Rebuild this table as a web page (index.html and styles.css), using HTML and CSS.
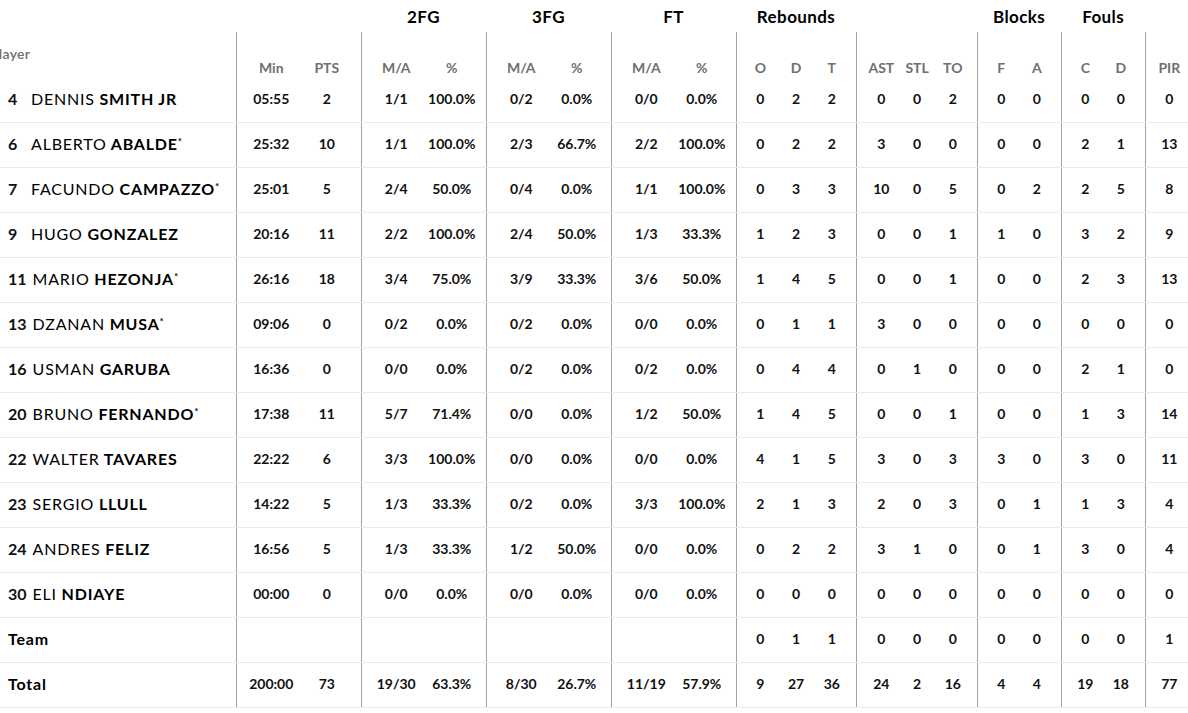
FILE: index.html
```html
<!DOCTYPE html>
<html lang="en">
<head>
<meta charset="utf-8">
<title>Box score</title>
<link rel="stylesheet" href="styles.css">
</head>
<body>
<div class="wrap">
<table class="box">
  <colgroup>
    <col class="c-player">
    <col class="c-a"><col class="c-b">
    <col class="c-a"><col class="c-b">
    <col class="c-a"><col class="c-b">
    <col class="c-a"><col class="c-b">
    <col class="c-s1"><col class="c-s"><col class="c-s2">
    <col class="c-s1w"><col class="c-s"><col class="c-s2">
    <col class="c-s1"><col class="c-s2">
    <col class="c-s1"><col class="c-s2">
    <col class="c-pir">
  </colgroup>
  <thead>
    <tr class="groups">
      <th></th>
      <th colspan="2"></th>
      <th colspan="2">2FG</th>
      <th colspan="2">3FG</th>
      <th colspan="2">FT</th>
      <th colspan="3">Rebounds</th>
      <th colspan="3"></th>
      <th colspan="2">Blocks</th>
      <th colspan="2">Fouls</th>
      <th></th>
    </tr>
    <tr class="labels">
      <th class="player-h">Player</th>
      <th>Min</th><th>PTS</th>
      <th>M/A</th><th>%</th>
      <th>M/A</th><th>%</th>
      <th>M/A</th><th>%</th>
      <th>O</th><th>D</th><th>T</th>
      <th>AST</th><th>STL</th><th>TO</th>
      <th>F</th><th>A</th>
      <th>C</th><th>D</th>
      <th>PIR</th>
    </tr>
  </thead>
  <tbody>
    <tr><td><span class="num">4</span><span class="first">DENNIS</span> <span class="last">SMITH JR</span></td><td>05:55</td><td>2</td><td>1/1</td><td>100.0%</td><td>0/2</td><td>0.0%</td><td>0/0</td><td>0.0%</td><td>0</td><td>2</td><td>2</td><td>0</td><td>0</td><td>2</td><td>0</td><td>0</td><td>0</td><td>0</td><td>0</td></tr>
    <tr><td><span class="num">6</span><span class="first">ALBERTO</span> <span class="last">ABALDE</span><sup class="star">*</sup></td><td>25:32</td><td>10</td><td>1/1</td><td>100.0%</td><td>2/3</td><td>66.7%</td><td>2/2</td><td>100.0%</td><td>0</td><td>2</td><td>2</td><td>3</td><td>0</td><td>0</td><td>0</td><td>0</td><td>2</td><td>1</td><td>13</td></tr>
    <tr><td><span class="num">7</span><span class="first">FACUNDO</span> <span class="last">CAMPAZZO</span><sup class="star">*</sup></td><td>25:01</td><td>5</td><td>2/4</td><td>50.0%</td><td>0/4</td><td>0.0%</td><td>1/1</td><td>100.0%</td><td>0</td><td>3</td><td>3</td><td>10</td><td>0</td><td>5</td><td>0</td><td>2</td><td>2</td><td>5</td><td>8</td></tr>
    <tr><td><span class="num">9</span><span class="first">HUGO</span> <span class="last">GONZALEZ</span></td><td>20:16</td><td>11</td><td>2/2</td><td>100.0%</td><td>2/4</td><td>50.0%</td><td>1/3</td><td>33.3%</td><td>1</td><td>2</td><td>3</td><td>0</td><td>0</td><td>1</td><td>1</td><td>0</td><td>3</td><td>2</td><td>9</td></tr>
    <tr><td><span class="num">11</span><span class="first">MARIO</span> <span class="last">HEZONJA</span><sup class="star">*</sup></td><td>26:16</td><td>18</td><td>3/4</td><td>75.0%</td><td>3/9</td><td>33.3%</td><td>3/6</td><td>50.0%</td><td>1</td><td>4</td><td>5</td><td>0</td><td>0</td><td>1</td><td>0</td><td>0</td><td>2</td><td>3</td><td>13</td></tr>
    <tr><td><span class="num">13</span><span class="first">DZANAN</span> <span class="last">MUSA</span><sup class="star">*</sup></td><td>09:06</td><td>0</td><td>0/2</td><td>0.0%</td><td>0/2</td><td>0.0%</td><td>0/0</td><td>0.0%</td><td>0</td><td>1</td><td>1</td><td>3</td><td>0</td><td>0</td><td>0</td><td>0</td><td>0</td><td>0</td><td>0</td></tr>
    <tr><td><span class="num">16</span><span class="first">USMAN</span> <span class="last">GARUBA</span></td><td>16:36</td><td>0</td><td>0/0</td><td>0.0%</td><td>0/2</td><td>0.0%</td><td>0/2</td><td>0.0%</td><td>0</td><td>4</td><td>4</td><td>0</td><td>1</td><td>0</td><td>0</td><td>0</td><td>2</td><td>1</td><td>0</td></tr>
    <tr><td><span class="num">20</span><span class="first">BRUNO</span> <span class="last">FERNANDO</span><sup class="star">*</sup></td><td>17:38</td><td>11</td><td>5/7</td><td>71.4%</td><td>0/0</td><td>0.0%</td><td>1/2</td><td>50.0%</td><td>1</td><td>4</td><td>5</td><td>0</td><td>0</td><td>1</td><td>0</td><td>0</td><td>1</td><td>3</td><td>14</td></tr>
    <tr><td><span class="num">22</span><span class="first">WALTER</span> <span class="last">TAVARES</span></td><td>22:22</td><td>6</td><td>3/3</td><td>100.0%</td><td>0/0</td><td>0.0%</td><td>0/0</td><td>0.0%</td><td>4</td><td>1</td><td>5</td><td>3</td><td>0</td><td>3</td><td>3</td><td>0</td><td>3</td><td>0</td><td>11</td></tr>
    <tr><td><span class="num">23</span><span class="first">SERGIO</span> <span class="last">LLULL</span></td><td>14:22</td><td>5</td><td>1/3</td><td>33.3%</td><td>0/2</td><td>0.0%</td><td>3/3</td><td>100.0%</td><td>2</td><td>1</td><td>3</td><td>2</td><td>0</td><td>3</td><td>0</td><td>1</td><td>1</td><td>3</td><td>4</td></tr>
    <tr><td><span class="num">24</span><span class="first">ANDRES</span> <span class="last">FELIZ</span></td><td>16:56</td><td>5</td><td>1/3</td><td>33.3%</td><td>1/2</td><td>50.0%</td><td>0/0</td><td>0.0%</td><td>0</td><td>2</td><td>2</td><td>3</td><td>1</td><td>0</td><td>0</td><td>1</td><td>3</td><td>0</td><td>4</td></tr>
    <tr><td><span class="num">30</span><span class="first">ELI</span> <span class="last">NDIAYE</span></td><td>00:00</td><td>0</td><td>0/0</td><td>0.0%</td><td>0/0</td><td>0.0%</td><td>0/0</td><td>0.0%</td><td>0</td><td>0</td><td>0</td><td>0</td><td>0</td><td>0</td><td>0</td><td>0</td><td>0</td><td>0</td><td>0</td></tr>
    <tr class="sum"><td>Team</td><td></td><td></td><td></td><td></td><td></td><td></td><td></td><td></td><td>0</td><td>1</td><td>1</td><td>0</td><td>0</td><td>0</td><td>0</td><td>0</td><td>0</td><td>0</td><td>1</td></tr>
    <tr class="sum"><td>Total</td><td>200:00</td><td>73</td><td>19/30</td><td>63.3%</td><td>8/30</td><td>26.7%</td><td>11/19</td><td>57.9%</td><td>9</td><td>27</td><td>36</td><td>24</td><td>2</td><td>16</td><td>4</td><td>4</td><td>19</td><td>18</td><td>77</td></tr>
  </tbody>
</table>
</div>
</body>
</html>
```

FILE: styles.css
```css
html, body {
  margin: 0;
  padding: 0;
  background: #fff;
}

.wrap {
  width: 1188px;
  overflow: hidden;
}

.box {
  margin-left: -10px;
  width: 1203px;
  table-layout: fixed;
  border-collapse: collapse;
  font-family: Lato, "Liberation Sans", sans-serif;
  color: #111;
}

.c-player { width: 246px; }
.c-a { width: 63px; }
.c-b { width: 62px; }
.c-s1 { width: 42px; }
.c-s1w { width: 43px; }
.c-s { width: 36px; }
.c-s2 { width: 42px; }
.c-pir { width: 48px; }

.box th,
.box td {
  padding: 0;
  text-align: center;
  white-space: nowrap;
  box-sizing: border-box;
}

/* group title row */
.groups th {
  height: 32px;
  padding-top: 7px;
  font-size: 17px;
  line-height: 20px;
  font-weight: 700;
  letter-spacing: 0.4px;
  color: #000;
  vertical-align: top;
}

/* sub labels row */
.labels th {
  height: 45px;
  font-size: 14px;
  line-height: 17px;
  font-weight: 700;
  color: #6f6f6f;
  vertical-align: bottom;
  padding-bottom: 1px;
}

.labels th.player-h {
  text-align: left;
  vertical-align: middle;
  padding-bottom: 3px;
  padding-top: 0;
  font-weight: 600;
  letter-spacing: 0.3px;
}

/* body rows */
.box tbody td {
  height: 45px;
  padding-bottom: 2px;
  font-size: 14px;
  font-weight: 700;
  color: #111;
  vertical-align: middle;
  border-bottom: 1px solid #ececec;
}

.box tbody td:first-child {
  text-align: left;
  padding-left: 18px;
  font-size: 16px;
  letter-spacing: 0.8px;
}

.num {
  display: inline-block;
  min-width: 17px;
  margin-right: 6px;
  font-weight: 700;
  letter-spacing: 0;
}

.first {
  font-weight: 400;
  color: #000;
}

.last {
  font-weight: 700;
  color: #000;
}

.star {
  font-size: 10px;
  font-weight: 700;
  vertical-align: top;
  line-height: 10px;
  position: relative;
  top: 2px;
  letter-spacing: 0;
}

.sum td:first-child {
  font-weight: 700;
  color: #000;
}

/* column groups: dividers and inner padding */
.labels th:nth-child(2), .labels th:nth-child(4), .labels th:nth-child(6), .labels th:nth-child(8),
.labels th:nth-child(10), .labels th:nth-child(13), .labels th:nth-child(16), .labels th:nth-child(18),
.labels th:nth-child(20),
.box tbody td:nth-child(2), .box tbody td:nth-child(4), .box tbody td:nth-child(6), .box tbody td:nth-child(8),
.box tbody td:nth-child(10), .box tbody td:nth-child(13), .box tbody td:nth-child(16), .box tbody td:nth-child(18),
.box tbody td:nth-child(20) {
  border-left: 1px solid #a3a3a3;
}

.labels th:nth-child(2), .labels th:nth-child(4), .labels th:nth-child(6), .labels th:nth-child(8),
.labels th:nth-child(13),
.box tbody td:nth-child(2), .box tbody td:nth-child(4), .box tbody td:nth-child(6), .box tbody td:nth-child(8),
.box tbody td:nth-child(13) {
  padding-left: 7px;
}

.labels th:nth-child(10), .labels th:nth-child(16), .labels th:nth-child(18), .labels th:nth-child(20),
.box tbody td:nth-child(10), .box tbody td:nth-child(16), .box tbody td:nth-child(18), .box tbody td:nth-child(20) {
  padding-left: 6px;
}

.labels th:nth-child(3), .labels th:nth-child(5), .labels th:nth-child(7), .labels th:nth-child(9),
.labels th:nth-child(12), .labels th:nth-child(15), .labels th:nth-child(17), .labels th:nth-child(19),
.labels th:nth-child(20),
.box tbody td:nth-child(3), .box tbody td:nth-child(5), .box tbody td:nth-child(7), .box tbody td:nth-child(9),
.box tbody td:nth-child(12), .box tbody td:nth-child(15), .box tbody td:nth-child(17), .box tbody td:nth-child(19),
.box tbody td:nth-child(20) {
  padding-right: 6px;
}
```
